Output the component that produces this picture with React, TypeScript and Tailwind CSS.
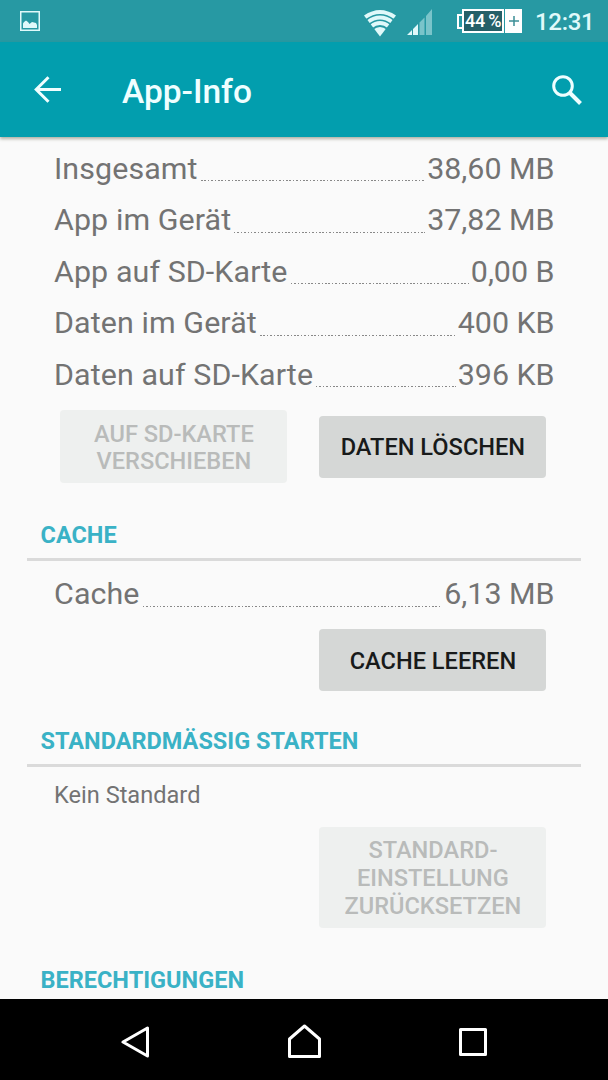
import type { ReactNode } from "react";

type Size = { label: string; value: string };

const storage: Size[] = [
  { label: "Insgesamt", value: "38,60 MB" },
  { label: "App im Gerät", value: "37,82 MB" },
  { label: "App auf SD-Karte", value: "0,00 B" },
  { label: "Daten im Gerät", value: "400 KB" },
  { label: "Daten auf SD-Karte", value: "396 KB" },
];

function StatusBar() {
  return (
    <div className="flex h-[42px] shrink-0 items-center bg-[#2799a3] pl-5 text-[#e0f9fa]">
      <svg width="20" height="20" viewBox="0 0 20 20" fill="none">
        <rect x="0.75" y="0.75" width="18.5" height="18.5" stroke="currentColor" strokeWidth="1.5" />
        <path d="M3 17v-4.500l1-1.500 2-1.500 2 1.500 1.500 2 2.500-2 2 .5L16 12l1 2V17z" fill="currentColor" />
      </svg>
      <svg className="mt-[3px] ml-[323px]" width="34" height="28" viewBox="0 0 34 28" fill="none">
        <path d="M1 6.500Q17 -4.500 33 6.500L17 27.500z" fill="currentColor" />
        <path d="M3 11Q17 0.500 31 11M6 15.500Q17 7 28 15.500M9.500 20Q17 14 24.500 20" stroke="#2799a3" strokeWidth="1.700" />
      </svg>
      <svg className="mt-px ml-[10px]" width="25" height="26" viewBox="0 0 25 26" fill="currentColor">
        <path d="M0 26l5-5v5z M6 20l5-5v11H6z" />
        <path d="M12.500 13.500l5-5V26h-5z M19 7l6-7v26h-6z" opacity="0.45" />
      </svg>
      <div className="ml-[25px] flex h-6 w-[65px] items-center text-white">
        <div className="h-[15px] w-[5px] border-2 border-r-0 border-current" />
        <div className="flex h-6 w-[43px] items-center justify-center border-2 border-current bg-[#256068] text-[18px] leading-none font-medium tracking-[-0.2px] whitespace-nowrap [word-spacing:-1px]">
          44 %
        </div>
        <div className="ml-px flex h-6 w-[17px] items-center justify-center bg-current">
          <svg width="10" height="10" viewBox="0 0 10 10" stroke="#3d8f96" strokeWidth="1.5">
            <path d="M5 0v10M0 5h10" />
          </svg>
        </div>
      </div>
      <span className="mt-[2px] ml-[13px] text-[24px] leading-none font-medium tracking-[-0.3px]">12:31</span>
    </div>
  );
}

function AppBar() {
  return (
    <header className="z-10 flex h-[95px] shrink-0 items-center bg-[#029eae] pr-[26px] pl-[34px] text-[#effeff] shadow-[0_2px_3px_rgba(60,70,40,0.4)]">
      <svg width="27" height="27" viewBox="0 0 27 27" fill="none" stroke="currentColor" strokeWidth="3">
        <path d="M27 13.500H2M14.500 1.200L2.200 13.500l12.300 12.300" />
      </svg>
      <h1 className="mt-[4px] ml-[61px] flex-1 text-[33.500px] leading-none font-medium">App-Info</h1>
      <svg width="30" height="30" viewBox="0 0 30 30" fill="none" stroke="currentColor">
        <circle cx="11" cy="11" r="9.300" strokeWidth="3" />
        <path d="M18 18l10.500 10.500" strokeWidth="4" />
      </svg>
    </header>
  );
}

function SizeRow({ label, value }: Size) {
  return (
    <div className="flex h-[51.500px] items-center pr-[53.500px] pl-[54px] text-[30.400px] leading-none text-[#737373]">
      <span className="tracking-[0.100px]">{label}</span>
      <span className="mt-[24px] mr-[2px] ml-[3px] h-px flex-1 bg-[repeating-linear-gradient(90deg,#888_0_1.500px,transparent_1.500px_3.400px)]" />
      <span>{value}</span>
    </div>
  );
}

function SectionTitle({ children }: { children: ReactNode }) {
  return (
    <h2 className="mx-[27px] h-[39px] border-b-3 border-[#dadada] pl-[13.500px] text-[23.500px] leading-[27px] font-bold text-[#3ab2c6]">
      {children}
    </h2>
  );
}

function Button({ children, disabled }: { children: ReactNode; disabled?: boolean }) {
  return (
    <button
      disabled={disabled}
      className="min-h-[62px] w-[227px] rounded-[4px] bg-[#d5d7d6] pt-[10.500px] pb-[7.500px] text-[23.600px] leading-[27.700px] font-medium text-[#181a1a] disabled:bg-[#eef0ef] disabled:text-[#b9bbba]"
    >
      {children}
    </button>
  );
}

function NavBar() {
  return (
    <nav className="flex h-[81px] shrink-0 items-center bg-black pl-[121px] text-white">
      <svg className="mt-[5px]" width="29" height="32" viewBox="0 0 29 32" fill="none" stroke="currentColor" strokeWidth="3" strokeLinejoin="round">
        <path d="M26.500 2v28L2 16z" />
      </svg>
      <svg className="mt-[3px] ml-[138px]" width="33" height="34" viewBox="0 0 33 34" fill="none" stroke="currentColor" strokeWidth="3" strokeLinejoin="round">
        <path d="M1.500 15L16.500 2l15 13v17.500h-30z" />
      </svg>
      <svg className="mt-[5px] ml-[138px]" width="28" height="28" viewBox="0 0 28 28" fill="none" stroke="currentColor" strokeWidth="3" strokeLinejoin="round">
        <rect x="1.500" y="1.500" width="25" height="25" />
      </svg>
    </nav>
  );
}

export default function App() {
  return (
    <div className="flex h-[1080px] w-[608px] flex-col overflow-hidden bg-[#fafafa] font-[Roboto,sans-serif]">
      <StatusBar />
      <AppBar />
      <main className="min-h-0 flex-1 overflow-hidden pt-[6px]">
        {storage.map((row) => (
          <SizeRow key={row.label} {...row} />
        ))}
        <div className="mt-[9.500px] flex items-center justify-between pr-[61.600px] pl-[60.400px]">
          <Button disabled>
            AUF SD-KARTE
            <br />
            VERSCHIEBEN
          </Button>
          <Button>DATEN LÖSCHEN</Button>
        </div>

        <div className="mt-[39px]">
          <SectionTitle>CACHE</SectionTitle>
          <div className="mt-[7px]">
            <SizeRow label="Cache" value="6,13 MB" />
          </div>
          <div className="mt-[9.500px] flex justify-end pr-[61.600px]">
            <Button>CACHE LEEREN</Button>
          </div>
        </div>

        <div className="mt-[37px]">
          <SectionTitle>STANDARDMÄSSIG STARTEN</SectionTitle>
          <p className="mt-[14px] pl-[54px] text-[23.600px] leading-[28px] text-[#737373]">Kein Standard</p>
          <div className="mt-[17.500px] flex justify-end pr-[61.600px]">
            <Button disabled>
              STANDARD-
              <br />
              EINSTELLUNG
              <br />
              ZURÜCKSETZEN
            </Button>
          </div>
        </div>

        <div className="mt-[38.500px]">
          <SectionTitle>BERECHTIGUNGEN</SectionTitle>
        </div>
      </main>
      <NavBar />
    </div>
  );
}
